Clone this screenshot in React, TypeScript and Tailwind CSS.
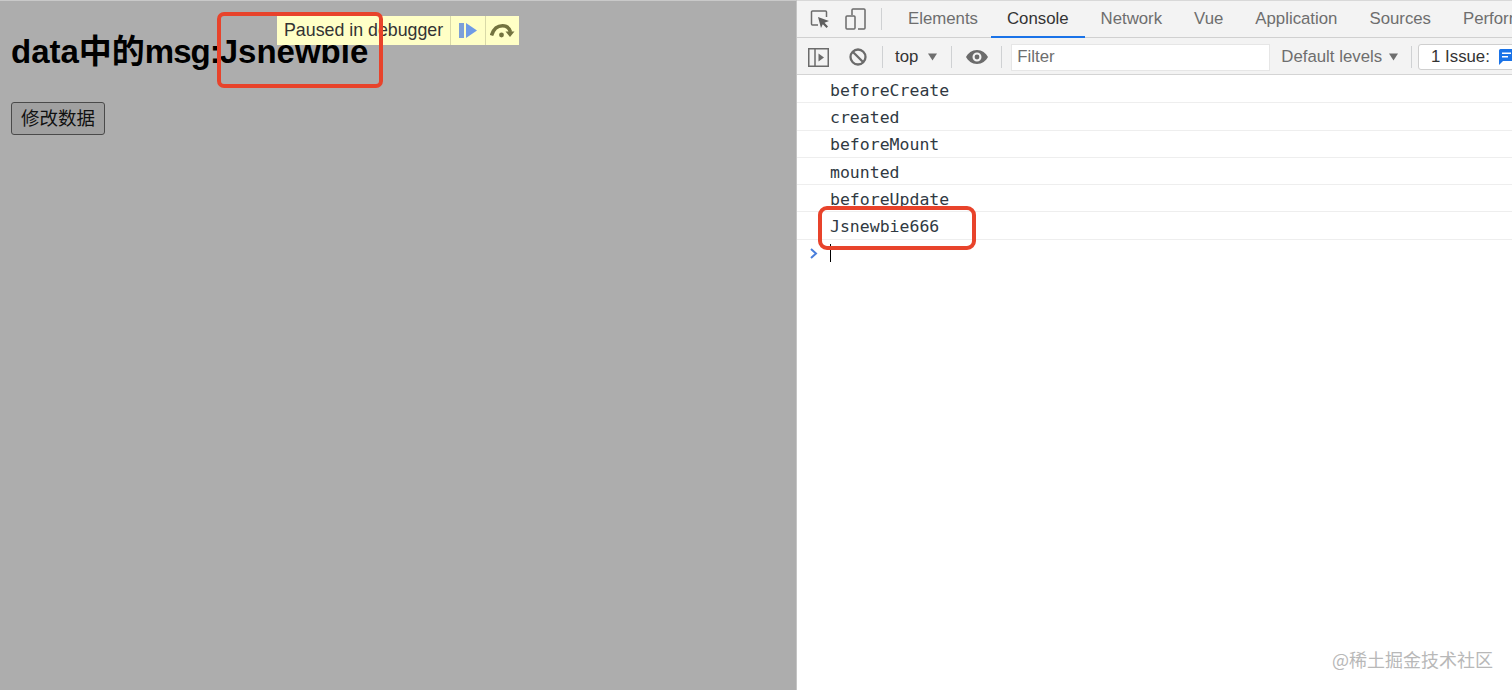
import React from 'react';

const logs = ['beforeCreate', 'created', 'beforeMount', 'mounted', 'beforeUpdate', 'Jsnewbie666'];
const tabs = ['Elements', 'Console', 'Network', 'Vue', 'Application', 'Sources', 'Performance'];

function Divider() {
  return <div className="w-px h-[22px] bg-[#cfd1d3] shrink-0" />;
}

function Caret() {
  return (
    <svg width="11" height="8" viewBox="0 0 11 8" className="shrink-0">
      <path d="M1 0.5h9L5.5 7.5z" fill="#6e6e6e" />
    </svg>
  );
}

function PausedBanner() {
  return (
    <div className="absolute left-[277px] top-[15px] h-[29px] flex items-stretch bg-[#ffffc6] text-[#333] text-[17.800px] font-['Liberation_Sans',sans-serif]">
      <div className="w-[173px] pl-[7px] flex items-center whitespace-nowrap">Paused in debugger</div>
      <div className="w-[35px] border-l border-[#d9d9a8] flex items-center justify-center">
        <svg width="18" height="15" viewBox="0 0 18 15">
          <rect x="0" y="0" width="5" height="15" fill="#7c9fd8" />
          <path d="M7 0l11 7.500-11 7.500z" fill="#6f9be6" />
        </svg>
      </div>
      <div className="w-[34px] border-l border-[#d9d9a8] flex items-center justify-center">
        <svg width="25" height="14" viewBox="0 0 25 14">
          <path d="M1.500 11.500C3.500 5 8 1.800 12.500 1.800S19.500 4.500 20.500 8" fill="none" stroke="#73733f" strokeWidth="3.600" />
          <path d="M15.500 7.500h9l-4.500 5.500z" fill="#73733f" />
          <circle cx="11.500" cy="11" r="2.400" fill="#73733f" />
        </svg>
      </div>
    </div>
  );
}

export default function App() {
  return (
    <div className="w-[1512px] h-[690px] overflow-hidden flex bg-white font-['Liberation_Sans',sans-serif]">
      {/* Page being debugged */}
      <div className="relative w-[796px] shrink-0 bg-[#adadad] border-t border-[#c9c9c9] pl-[11px] font-['Liberation_Sans','Noto_Sans_CJK_SC',sans-serif]">
        <h1 className="mt-[29px] text-[33px] leading-[44px] font-bold text-black whitespace-nowrap">data中的<span className="tracking-[-1px]">msg:</span>Jsnewbie</h1>
        <button className="mt-[28px] w-[94px] h-[33px] flex items-center justify-center rounded-[3px] border border-[#4a4a4a] bg-[#a0a0a0] text-[18.500px] text-[#111]">修改数据</button>
        <PausedBanner />
        <div className="absolute left-[217px] top-[11px] w-[166px] h-[76px] rounded-[7px] border-[4px] border-[#e8432b]" />
      </div>

      {/* DevTools */}
      <div className="relative flex-1 min-w-0 flex flex-col border-l border-[#c4c4c4] overflow-hidden">
        <div className="h-[38px] shrink-0 flex items-stretch bg-[#f3f3f3] border-t border-[#d8d8d8] border-b border-b-[#d0d0d0] pl-[13px]">
          <div className="flex items-center gap-[15px] pr-[15px]">
            <svg width="20" height="20" viewBox="0 0 20 20" fill="none">
              <path d="M8 16H2.500a1 1 0 0 1-1-1V3a1 1 0 0 1 1-1h13a1 1 0 0 1 1 1v5" stroke="#6b6b6b" strokeWidth="1.500" />
              <path d="M8 8l11 4-4.500 1.700 3.500 3.800-1.500 1.500-3.700-3.800L11 19z" fill="#5f5f5f" />
            </svg>
            <svg width="21" height="22" viewBox="0 0 21 22" fill="none" stroke="#6b6b6b" strokeWidth="1.500">
              <path d="M7 7V2a1 1 0 0 1 1-1h11a1 1 0 0 1 1 1v18a1 1 0 0 1-1 1h-6" />
              <rect x="1" y="8" width="9" height="13" rx="1" />
            </svg>
          </div>
          <div className="self-center"><Divider /></div>
          <div className="flex items-stretch pl-[8px] whitespace-nowrap text-[16.800px]">
            {tabs.map(tab => (
              <div
                key={tab}
                className={tab === 'Console'
                  ? 'px-[16px] flex items-center text-[#333] border-b-2 border-[#1a73e8] -mb-px'
                  : tab === 'Elements'
                    ? 'pl-[18px] pr-[13px] flex items-center text-[#6e6e6e]'
                    : 'px-[16px] flex items-center text-[#6e6e6e]'}
              >
                {tab}
              </div>
            ))}
          </div>
        </div>

        <div className="h-[37px] shrink-0 flex items-center bg-[#f3f3f3] border-b border-[#d4d4d4] pl-[11px] pt-[2px] whitespace-nowrap text-[16.800px] text-[#5f6368]">
          <svg width="21" height="19" viewBox="0 0 21 19" fill="none" className="shrink-0">
            <rect x="0.750" y="0.750" width="19.500" height="17.500" stroke="#6b6b6b" strokeWidth="1.500" />
            <path d="M7 1v17" stroke="#6b6b6b" strokeWidth="1.500" />
            <path d="M10.500 5.500l5.500 4-5.500 4z" fill="#6b6b6b" />
          </svg>
          <svg width="18" height="18" viewBox="0 0 18 18" fill="none" stroke="#6b6b6b" strokeWidth="2.300" className="ml-[20px] shrink-0">
            <circle cx="9" cy="9" r="7.500" />
            <path d="M3.700 3.700l10.600 10.600" />
          </svg>
          <div className="ml-[15px]"><Divider /></div>
          <span className="ml-[12px] text-[#333]">top</span>
          <div className="ml-[9px]"><Caret /></div>
          <div className="ml-[13px]"><Divider /></div>
          <svg width="22" height="14" viewBox="0 0 22 14" className="ml-[14px] shrink-0">
            <path fillRule="evenodd" d="M11 0c5 0 9 3.300 11 7-2 3.700-6 7-11 7S2 10.700 0 7c2-3.700 6-7 11-7zm0 2.500a4.500 4.500 0 1 0 0 9 4.500 4.500 0 0 0 0-9z" fill="#6b6b6b" />
            <circle cx="11" cy="7" r="2.400" fill="#6b6b6b" />
          </svg>
          <div className="ml-[13px]"><Divider /></div>
          <div className="ml-[9px] w-[259px] h-[27px] shrink-0 bg-white border border-[#e6e6e6] flex items-center pl-[5px] text-[#6e6e6e]">Filter</div>
          <span className="ml-[11px] text-[#6e6e6e]">Default levels</span>
          <div className="ml-[6px]"><Caret /></div>
          <div className="ml-[12px]"><Divider /></div>
          <div className="ml-[6px] h-[26px] pl-[12px] w-[120px] shrink-0 flex items-center gap-[9px] bg-white border border-[#cfcfcf] rounded-[3px] text-[#333]">
            <span>1 Issue:</span>
            <svg width="15" height="16" viewBox="0 0 15 16" className="shrink-0">
              <path d="M1.500 0h12A1.500 1.500 0 0 1 15 1.500v9a1.500 1.500 0 0 1-1.500 1.500H4l-4 4V1.500A1.500 1.500 0 0 1 1.500 0z" fill="#1a73e8" />
              <path d="M3 3.500h9v1.500H3zM3 7h6v1.500H3z" fill="#fff" />
            </svg>
          </div>
        </div>

        <div className="flex-1 pt-px bg-white font-['DejaVu_Sans_Mono',monospace] text-[16.500px] text-[#303942]">
          {logs.map(line => (
            <div key={line} className="h-[27.300px] pl-[33px] pt-[4px] flex items-center border-b border-[#eeeeee]">{line}</div>
          ))}
          <div className="relative h-[27px] pl-[33px] flex items-center">
            <svg width="8" height="11" viewBox="0 0 8 11" className="absolute left-[13px] top-[8px]" fill="none" stroke="#4a7fdc" strokeWidth="2">
              <path d="M1 1l5 4.500-5 4.500" />
            </svg>
            <div className="w-px h-[18px] bg-black" />
          </div>
        </div>

        <div className="absolute left-[21px] top-[206px] w-[158px] h-[44px] rounded-[9px] border-[4px] border-[#e8432b]" />
        <div className="absolute right-[19px] top-[647px] text-[18px] leading-[24px] text-[#b8b8b8] whitespace-nowrap font-['Noto_Sans_CJK_SC','Liberation_Sans',sans-serif]">@稀土掘金技术社区</div>
      </div>
    </div>
  );
}
